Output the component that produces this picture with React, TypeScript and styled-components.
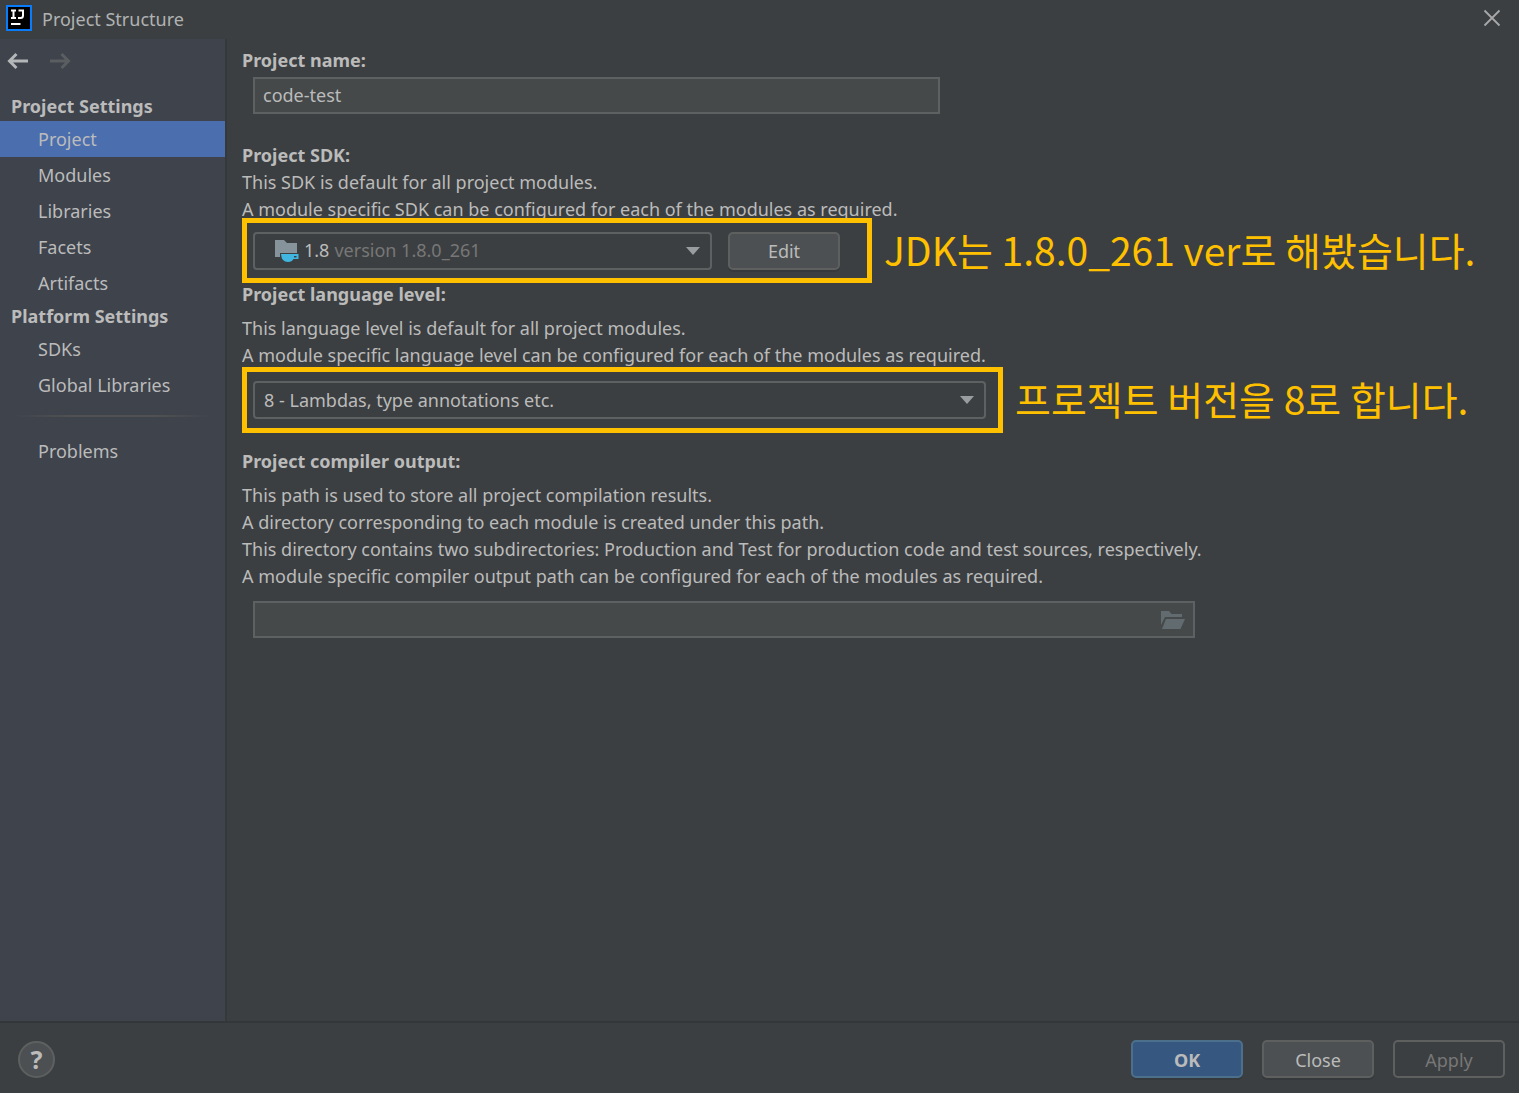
import React, { useState } from 'react';
import styled, { createGlobalStyle } from 'styled-components';

const GlobalStyle = createGlobalStyle`
  *, *::before, *::after { box-sizing: border-box; }
  body {
    margin: 0;
    background: #3c3f41;
    color: #bbbbbb;
    font-family: "Noto Sans", "Noto Sans CJK KR", sans-serif;
    font-size: 18px;
    line-height: 27px;
  }
  button, input, select { font: inherit; color: inherit; margin: 0; }
  p, h1, h2 { margin: 0; font-size: inherit; }
`;

const Dialog = styled.div`
  display: flex;
  flex-direction: column;
  min-height: 100vh;
`;

const TitleBar = styled.header`
  display: flex;
  align-items: center;
  gap: 10px;
  height: 39px;
  padding: 0 18px 4px 6px;
`;

const Title = styled.h1`
  flex: 1;
  padding-top: 4px;
  font-weight: 400;
  color: #b0b2b3;
`;

const IconButton = styled.button`
  display: flex;
  padding: 0;
  border: 0;
  background: none;
`;

const Body = styled.div`
  display: flex;
  flex: 1;
`;

const Sidebar = styled.nav`
  width: 227px;
  flex: none;
  background: #3e434c;
  border-right: 2px solid #36393b;
`;

const History = styled.div`
  display: flex;
  gap: 20px;
  padding: 11px 7px 0;
  height: 52px;
`;

const GroupTitle = styled.h2`
  padding-left: 11px;
  line-height: 30px;
  font-weight: 700;
`;

const NavList = styled.ul`
  list-style: none;
  margin: 0;
  padding: 0;
`;

const NavLink = styled.a<{ $active?: boolean }>`
  display: block;
  padding-left: 38px;
  line-height: 36px;
  color: inherit;
  text-decoration: none;
  background: ${(p) => (p.$active ? '#4b6eaf' : 'transparent')};
`;

const Divider = styled.hr`
  height: 2px;
  margin: 12px 11px 16px;
  border: 0;
  background: linear-gradient(90deg, transparent, #515151 30%, #515151 70%, transparent);
`;

const Main = styled.main`
  flex: 1;
  min-width: 0;
  padding: 8px 15px;
`;

const Section = styled.section<{ $space?: number }>`
  margin-bottom: ${(p) => p.$space ?? 0}px;
`;

const Heading = styled.label`
  display: block;
  font-weight: 700;
`;

const Description = styled.p<{ $gap?: number }>`
  margin-top: ${(p) => p.$gap ?? 0}px;
  white-space: nowrap;
`;

const Field = styled.div<{ $width: number; $gap: number }>`
  display: flex;
  align-items: center;
  max-width: ${(p) => p.$width}px;
  height: 37px;
  margin: ${(p) => p.$gap}px 0 0 11px;
  padding: 0 8px;
  border: 2px solid #5e6162;
  background: #45494a;
`;

const TextInput = styled.input`
  flex: 1;
  min-width: 0;
  padding: 0;
  border: 0;
  outline: 0;
  background: none;
`;

const AnnotatedRow = styled.div<{ $overlap: number }>`
  display: flex;
  align-items: center;
  gap: 12px;
  margin: -${(p) => p.$overlap}px 0 -2px;
`;

const Highlight = styled.div<{ $width: number; $height: number; $end: number }>`
  display: flex;
  flex: none;
  align-items: center;
  gap: 16px;
  width: ${(p) => p.$width}px;
  height: ${(p) => p.$height}px;
  padding: 0 ${(p) => p.$end}px 0 6px;
  border: 5px solid #ffc000;
`;

const Note = styled.span`
  padding-bottom: 4px;
  font-family: "Noto Sans CJK KR", sans-serif;
  font-size: 39px;
  line-height: 56px;
  color: #ffc000;
  white-space: nowrap;
`;

const Combo = styled.div<{ $inset: number }>`
  display: flex;
  align-items: center;
  gap: 5px;
  flex: 1;
  height: 38px;
  padding: 0 10px 0 ${(p) => p.$inset}px;
  border: 2px solid #5e6162;
  border-radius: 4px;
`;

const Select = styled.select<{ $muted?: boolean }>`
  flex: 1;
  min-width: 0;
  padding: 0;
  border: 0;
  outline: 0;
  appearance: none;
  background: none;
  color: ${(p) => (p.$muted ? '#777777' : 'inherit')};
`;

const Button = styled.button<{ $kind?: 'primary' | 'disabled' }>`
  flex: none;
  width: 112px;
  height: 38px;
  padding: 2px 0 0;
  border: 2px solid ${(p) => (p.$kind === 'primary' ? '#4c708c' : '#5e6060')};
  border-radius: 5px;
  background: ${(p) =>
    p.$kind === 'primary' ? '#365880' : p.$kind === 'disabled' ? 'transparent' : '#4c5052'};
  color: ${(p) => (p.$kind === 'disabled' ? '#777777' : '#bbbbbb')};
  font-weight: ${(p) => (p.$kind === 'primary' ? 700 : 400)};
  box-shadow: ${(p) => (p.$kind === 'disabled' ? 'none' : '0 2px 0 #36393b')};
`;

const Footer = styled.footer`
  display: flex;
  align-items: center;
  gap: 19px;
  height: 72px;
  padding: 2px 14px 0 18px;
  border-top: 2px solid #343739;
`;

const HelpButton = styled.button`
  width: 37px;
  height: 37px;
  margin-right: auto;
  padding: 0;
  border: 2px solid #5e6060;
  border-radius: 50%;
  background: #4c5052;
  font-size: 25px;
  font-weight: 700;
  line-height: 33px;
`;

const Logo = () => (
  <svg width="26" height="26" viewBox="0 0 26 26" aria-hidden="true">
    <rect x="1" y="1" width="24" height="24" fill="#000" stroke="#087cfa" strokeWidth="2" />
    <path d="M5 5.500h5M7.500 5.500v7.500M5 13h5M12.500 5.500h4.500v5q0 2.500-2.500 2.500h-2.500" fill="none" stroke="#fff" strokeWidth="2" />
    <path d="M5 19h9.500" stroke="#fff" strokeWidth="2" />
  </svg>
);

const Arrow = ({ forward }: { forward?: boolean }) => (
  <svg width="22" height="22" viewBox="0 0 22 22" fill="none" stroke={forward ? '#5b5e61' : '#b4b6b8'} strokeWidth="3" aria-hidden="true">
    <path d={forward ? 'M1 11h18M12.500 4l7 7-7 7' : 'M21 11H3M9.500 4l-7 7 7 7'} />
  </svg>
);

const CloseIcon = () => (
  <svg width="18" height="18" viewBox="0 0 18 18" stroke="#a6a8a9" strokeWidth="1.800" aria-hidden="true">
    <path d="M1.500 1.500l15 15M16.500 1.500l-15 15" />
  </svg>
);

const Caret = () => (
  <svg width="14" height="8" viewBox="0 0 14 8" aria-hidden="true">
    <path d="M0 0h14L7 8z" fill="#9a9da0" />
  </svg>
);

const JdkIcon = () => (
  <svg width="24" height="24" viewBox="0 0 24 24" aria-hidden="true">
    <path d="M0 1h9l3 3h10v10H5v4H0z" fill="#87939a" />
    <path d="M6 15h17.500v5h-5q-1.500 3-5.500 3-6.500 0-7-8zM19 17v1.500h2.500v-1.500z" fill="#40b6e0" fillRule="evenodd" />
  </svg>
);

const FolderIcon = () => (
  <svg width="24" height="18" viewBox="0 0 24 18" fill="#626c70" aria-hidden="true">
    <path d="M0 0h8l2.500 3H21v3H4L0 14z" />
    <path d="M5 8h19l-4.500 10H1z" />
  </svg>
);

const projectPages = ['Project', 'Modules', 'Libraries', 'Facets', 'Artifacts'];
const platformPages = ['SDKs', 'Global Libraries'];

export default function App() {
  const [page, setPage] = useState('Project');
  const [name, setName] = useState('code-test');

  const renderPages = (pages: string[]) => (
    <NavList>
      {pages.map((item) => (
        <li key={item}>
          <NavLink href="#" $active={item === page} onClick={() => setPage(item)}>
            {item}
          </NavLink>
        </li>
      ))}
    </NavList>
  );

  return (
    <Dialog>
      <GlobalStyle />
      <TitleBar>
        <Logo />
        <Title>Project Structure</Title>
        <IconButton aria-label="Close window"><CloseIcon /></IconButton>
      </TitleBar>
      <Body>
        <Sidebar>
          <History>
            <IconButton aria-label="Back"><Arrow /></IconButton>
            <IconButton aria-label="Forward" disabled><Arrow forward /></IconButton>
          </History>
          <GroupTitle>Project Settings</GroupTitle>
          {renderPages(projectPages)}
          <GroupTitle>Platform Settings</GroupTitle>
          {renderPages(platformPages)}
          <Divider />
          {renderPages(['Problems'])}
        </Sidebar>
        <Main>
          <Section $space={28}>
            <Heading htmlFor="name">Project name:</Heading>
            <Field $width={687} $gap={3}>
              <TextInput id="name" value={name} onChange={(e) => setName(e.target.value)} />
            </Field>
          </Section>
          <Section>
            <Heading htmlFor="sdk">Project SDK:</Heading>
            <Description>
              This SDK is default for all project modules.<br />
              A module specific SDK can be configured for each of the modules as required.
            </Description>
            <AnnotatedRow $overlap={5}>
              <Highlight $width={630} $height={65} $end={27}>
                <Combo $inset={20}>
                  <JdkIcon />
                  <span>1.8</span>
                  <Select id="sdk" $muted>
                    <option>version 1.8.0_261</option>
                  </Select>
                  <Caret />
                </Combo>
                <Button>Edit</Button>
              </Highlight>
              <Note>JDK는 1.8.0_261 ver로 해봤습니다.</Note>
            </AnnotatedRow>
          </Section>
          <Section $space={17}>
            <Heading htmlFor="level">Project language level:</Heading>
            <Description $gap={7}>
              This language level is default for all project modules.<br />
              A module specific language level can be configured for each of the modules as required.
            </Description>
            <AnnotatedRow $overlap={2}>
              <Highlight $width={761} $height={66} $end={12}>
                <Combo $inset={9}>
                  <Select id="level">
                    <option>8 - Lambdas, type annotations etc.</option>
                  </Select>
                  <Caret />
                </Combo>
              </Highlight>
              <Note>프로젝트 버전을 8로 합니다.</Note>
            </AnnotatedRow>
          </Section>
          <Section>
            <Heading htmlFor="output">Project compiler output:</Heading>
            <Description $gap={7}>
              This path is used to store all project compilation results.<br />
              A directory corresponding to each module is created under this path.<br />
              This directory contains two subdirectories: Production and Test for production code and test sources, respectively.<br />
              A module specific compiler output path can be configured for each of the modules as required.
            </Description>
            <Field $width={942} $gap={11}>
              <TextInput id="output" />
              <IconButton aria-label="Browse"><FolderIcon /></IconButton>
            </Field>
          </Section>
        </Main>
      </Body>
      <Footer>
        <HelpButton aria-label="Help">?</HelpButton>
        <Button $kind="primary">OK</Button>
        <Button>Close</Button>
        <Button $kind="disabled" disabled>Apply</Button>
      </Footer>
    </Dialog>
  );
}
